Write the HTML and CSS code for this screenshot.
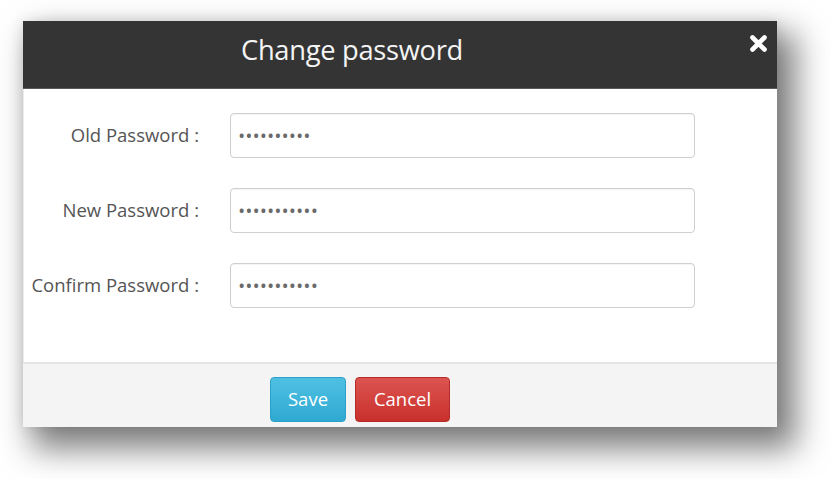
FILE: index.html
```html
<!DOCTYPE html>
<html>
<head>
<meta charset="utf-8">
<link rel="stylesheet" href="styles.css">
</head>
<body>
<div class="dialog">
  <div class="header">
    <h1 class="title">Change password</h1>
    <button class="close" aria-label="Close">
      <svg width="17" height="17" viewBox="0 0 17 17"><path d="M2.5 2.5 L14.5 14.5 M14.5 2.5 L2.5 14.5" stroke="#fff" stroke-width="4.6" stroke-linecap="round"/></svg>
    </button>
  </div>
  <form class="body">
    <div class="row">
      <label class="label">Old Password :</label>
      <div class="input">••••••••••</div>
    </div>
    <div class="row">
      <label class="label">New Password :</label>
      <div class="input">•••••••••••</div>
    </div>
    <div class="row">
      <label class="label">Confirm Password :</label>
      <div class="input">•••••••••••</div>
    </div>
  </form>
  <div class="footer">
    <button class="btn btn-save">Save</button>
    <button class="btn btn-cancel">Cancel</button>
  </div>
</div>
</body>
</html>
```
FILE: styles.css
```css
html, body {
  margin: 0;
  padding: 0;
  background: #ffffff;
}
html {
  min-height: 100%;
}
body {
  min-height: 479px;
  box-sizing: border-box;
  padding: 21px 0 0 23px;
  font-family: "Open Sans", "DejaVu Sans", sans-serif;
}
.dialog {
  width: 754px;
  background: #fff;
  box-shadow: 14px 17px 30px 5px rgba(0,0,0,0.5), 0 0 12px rgba(0,0,0,0.1);
  display: flex;
  flex-direction: column;
}
.header {
  height: 67px;
  background: #343434;
  border-bottom: 1px solid #5a5a5a;
  position: relative;
  display: flex;
  align-items: center;
}
.title {
  margin: 0 0 10px 218px;
  font-size: 27.3px;
  font-weight: 400;
  color: #f4f4f4;
  letter-spacing: -0.3px;
}
.close {
  position: absolute;
  right: 10px;
  top: 14px;
  background: none;
  border: 0;
  padding: 0;
  line-height: 0;
}
.body {
  padding: 24px 0 54px 0;
  display: flex;
  flex-direction: column;
  gap: 30px;
  border-left: 1px solid #ececec;
}
.row {
  display: flex;
  align-items: center;
}
.label {
  width: 175px;
  text-align: right;
  font-size: 18.5px;
  color: #555;
  margin-right: 31px;
  padding-bottom: 2px;
}
.input {
  width: 455px;
  height: 43px;
  border: 1px solid #cfcfcf;
  border-radius: 4px;
  box-sizing: content-box;
  display: flex;
  align-items: center;
  padding-left: 8px;
  font-size: 14px;
  font-weight: 700;
  letter-spacing: 2px;
  color: #6a6a6a;
  box-shadow: inset 0 1px 1px rgba(0,0,0,0.05);
}
.footer {
  height: 50px;
  background: #f4f4f4;
  border-top: 2px solid #e4e4e4;
  display: flex;
  align-items: flex-start;
  padding: 13px 0 0 247px;
  gap: 9px;
}
.btn {
  height: 45px;
  border-radius: 4px;
  font-family: "Open Sans", "DejaVu Sans", sans-serif;
  font-size: 18.5px;
  color: #fff;
  padding: 0 0 2px 0;
}
.btn-save {
  width: 76px;
  background: linear-gradient(#4fc0e3, #2fa9d2);
  border: 1px solid #2ba0c8;
}
.btn-cancel {
  width: 95px;
  background: linear-gradient(#dc5450, #c9302c);
  border: 1px solid #b52b27;
}
```
